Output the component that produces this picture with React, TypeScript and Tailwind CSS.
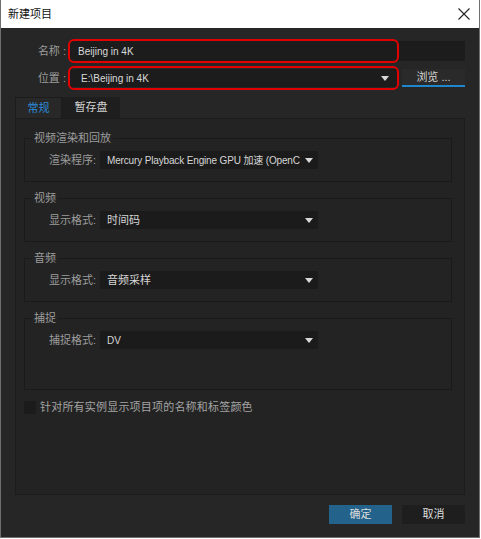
import React from "react";

const font = "font-['Liberation_Sans','Noto_Sans_CJK_SC',sans-serif]";

// small white caret used by every dropdown
const Caret = () => (
  <svg width="8" height="5" viewBox="0 0 8 5" className="shrink-0">
    <path d="M0 0h8L4 5z" fill="#d8d8d8" />
  </svg>
);

type SelectProps = { value: string; size?: string };

const Select = ({ value, size = "text-[11px]" }: SelectProps) => (
  <div className="flex h-[18px] w-[218px] items-center bg-[#1b1b1b] pl-[7px] pr-[5px]">
    <span className={`min-w-0 flex-1 whitespace-nowrap text-[#d6d6d6] ${size}`}>{value}</span>
    <span className="ml-[1px]">
      <Caret />
    </span>
  </div>
);

type GroupProps = { title: string; label: string; value: string; size?: string; tall?: boolean };

const Group = ({ title, label, value, size, tall }: GroupProps) => (
  <fieldset className={`border border-[#1a1a1a] px-0 pt-[6px] ${tall ? "pb-[40px]" : "pb-[12px]"}`}>
    <legend className="ml-[7px] px-[2px] text-[11px] leading-[14px] text-[#9c9c9c]">{title}</legend>
    <div className="flex items-center">
      <span className="w-[73px] pr-[2px] text-right text-[11px] leading-[18px] text-[#9c9c9c]">{label}:</span>
      <span className="ml-[2px]">
        <Select value={value} size={size} />
      </span>
    </div>
  </fieldset>
);

export default function App() {
  return (
    <div className={`h-[539px] w-[481px] bg-white ${font}`}>
      <div className="flex h-[538px] w-[480px] flex-col border-x border-b border-[#6f6f6f]">
        {/* title bar */}
        <div className="flex h-[28px] items-center justify-between bg-white pl-[7px] pr-[9px]">
          <span className="text-[11px] text-[#111]">新建项目</span>
          <svg width="12" height="12" viewBox="0 0 12 12">
            <path d="M0.5 0.5l11 11M11.5 0.5l-11 11" stroke="#222" strokeWidth="1.1" />
          </svg>
        </div>

        <div className="flex flex-1 flex-col bg-[#262626] px-[14px] pt-[13px] pb-[13px]">
          {/* name */}
          <div className="flex h-[20px] items-center">
            <span className="w-[53px] pr-[2px] text-right text-[11px] text-[#9c9c9c]">名称 :</span>
            <div className="relative ml-[2px] flex h-[20px] flex-1 items-center bg-[#1c1c1c] pl-[8px]">
              <span className="text-[10px] text-[#dadada]">Beijing in 4K</span>
              <div className="pointer-events-none absolute -left-[2px] -top-[2px] h-[24px] w-[331px] rounded-[6px] border-2 border-[#e20000]" />
            </div>
          </div>

          {/* location */}
          <div className="mt-[8px] flex h-[18px] items-center">
            <span className="w-[53px] pr-[2px] text-right text-[11px] text-[#9c9c9c]">位置 :</span>
            <div className="relative ml-[2px] flex h-[18px] w-[327px] items-center bg-[#1c1c1c] pl-[11px] pr-[8px]">
              <span className="flex-1 text-[10px] text-[#dadada]">E:\Beijing in 4K</span>
              <Caret />
              <div className="pointer-events-none absolute -left-[2px] -top-[3px] h-[24px] w-[331px] rounded-[6px] border-2 border-[#e20000]" />
            </div>
            <button className="ml-[5px] flex h-[18px] flex-1 items-center justify-center border-b-2 border-[#1e86cc] bg-[#2a2a2a] text-[11px] text-[#d4d4d4]">
              浏览 ...
            </button>
          </div>

          {/* tabs */}
          <div className="mt-[10px] flex h-[21px]">
            <div className="flex w-[47px] items-center justify-center border-x border-t border-[#1c1c1c] bg-[#282828] text-[11px] text-[#2b8ddb]">
              常规
            </div>
            <div className="flex w-[58px] items-center justify-center bg-[#1e1e1e] text-[11px] text-[#d2d2d2]">暂存盘</div>
          </div>

          {/* panel */}
          <div className="flex flex-1 flex-col gap-[9px] border border-[#1c1c1c] bg-[#232323] pl-[8px] pr-[12px] pt-[12px]">
            <Group title="视频渲染和回放" label="渲染程序" value="Mercury Playback Engine GPU 加速 (OpenC" size="text-[10px] tracking-[-0.15px]" />
            <Group title="视频" label="显示格式" value="时间码" />
            <Group title="音频" label="显示格式" value="音频采样" />
            <Group title="捕捉" label="捕捉格式" value="DV" size="text-[10px]" tall />
            <div className="flex items-center">
              <span className="h-[13px] w-[12px] bg-[#1b1b1b]" />
              <span className="ml-[4px] text-[11px] tracking-[0.2px] text-[#a4a4a4]">针对所有实例显示项目项的名称和标签颜色</span>
            </div>
          </div>

          {/* buttons */}
          <div className="mt-[10px] flex justify-end gap-[10px]">
            <button className="h-[19px] w-[63px] bg-[#23628b] text-[11px] text-[#dcdcdc]">确定</button>
            <button className="h-[19px] w-[63px] bg-[#1e1e1e] text-[11px] text-[#dcdcdc]">取消</button>
          </div>
        </div>
      </div>
    </div>
  );
}
